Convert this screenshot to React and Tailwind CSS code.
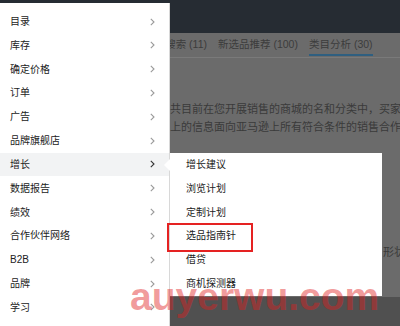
import React from 'react';

const FONT = 'font-["Liberation_Sans","Noto_Sans_CJK_SC",sans-serif]';

const mainItems = [
  '目录', '库存', '确定价格', '订单', '广告', '品牌旗舰店', '增长',
  '数据报告', '绩效', '合作伙伴网络', 'B2B', '品牌', '学习',
];

const subItems = ['增长建议', '浏览计划', '定制计划', '选品指南针', '借贷', '商机探测器'];

const Chevron = ({ active }) => (
  <svg width="5" height="8" viewBox="0 0 5 8" className="shrink-0">
    <polyline
      points="0.8,0.8 4,4 0.8,7.2"
      fill="none"
      stroke={active ? '#333' : '#9a9a9a'}
      strokeWidth="1.1"
    />
  </svg>
);

const App = () => {
  return (
    <div className={`relative w-[400px] h-[326px] overflow-hidden bg-[#6b6b6b] flex flex-col ${FONT}`}>
      {/* page behind the dimmed overlay */}
      <div className="h-[33px] bg-[#262c33] shrink-0" />
      <div className="h-[25px] shrink-0 flex items-end pl-[162px] border-b border-[#7a7a7a] text-[10.5px] leading-[14px] text-[#3c3c3c] whitespace-nowrap">
        <span className="w-[45px] text-right pb-[6px]">搜索 (11)</span>
        <span className="ml-[11px] w-[80px] pb-[6px]">新选品推荐 (100)</span>
        <span className="ml-[11px] pb-[3px] mb-[1px] border-b-2 border-[#2f5f80]">类目分析 (30)</span>
      </div>
      <div className="flex-1 pt-[42px] pl-[170px] text-[11px] leading-[18px] text-[#3a3a3a] whitespace-nowrap">
        <div>共目前在您开展销售的商城的名和分类中，买家搜索</div>
        <div>上的信息面向亚马逊上所有符合条件的销售合作伙伴</div>
        <div className="mt-[107px] ml-[213px]">形状</div>
      </div>
      <div className="h-[29px] bg-[#505050] shrink-0" />

      {/* main menu */}
      <div className="absolute left-0 top-[3px] bottom-0 w-[170px] bg-white border-r border-[#d8d8d8] pt-[6.6px]">
        {mainItems.map((label) => {
          const active = label === '增长';
          return (
            <div
              key={label}
              className={`h-[23.83px] flex items-center justify-between pl-[10px] pr-[14px] text-[10px] text-[#222] ${active ? 'bg-[#f2f3f4]' : ''}`}
            >
              <span>{label}</span>
              <Chevron active={active} />
            </div>
          );
        })}
      </div>

      {/* sub menu */}
      <div className="absolute left-[170px] top-[152.6px] w-[212px] bg-white">
        <div className="absolute left-[-6px] top-[6px] w-0 h-0 border-y-[6px] border-y-transparent border-r-[6px] border-r-white" />
        {subItems.map((label) => (
          <div key={label} className="h-[23.83px] flex items-center pl-[16px] text-[10px] text-[#222]">
            {label}
          </div>
        ))}
      </div>

      {/* highlight box */}
      <div className="absolute left-[167px] top-[223px] w-[86px] h-[29px] border-2 border-[#e52222]" />

      {/* watermark */}
      <div className="absolute left-[130px] top-[277px] text-[39px] leading-none font-bold text-[rgba(225,30,30,0.45)] font-['Liberation_Sans',sans-serif] whitespace-nowrap pointer-events-none">
        auyerwu.com
      </div>
    </div>
  );
};

export default App;
